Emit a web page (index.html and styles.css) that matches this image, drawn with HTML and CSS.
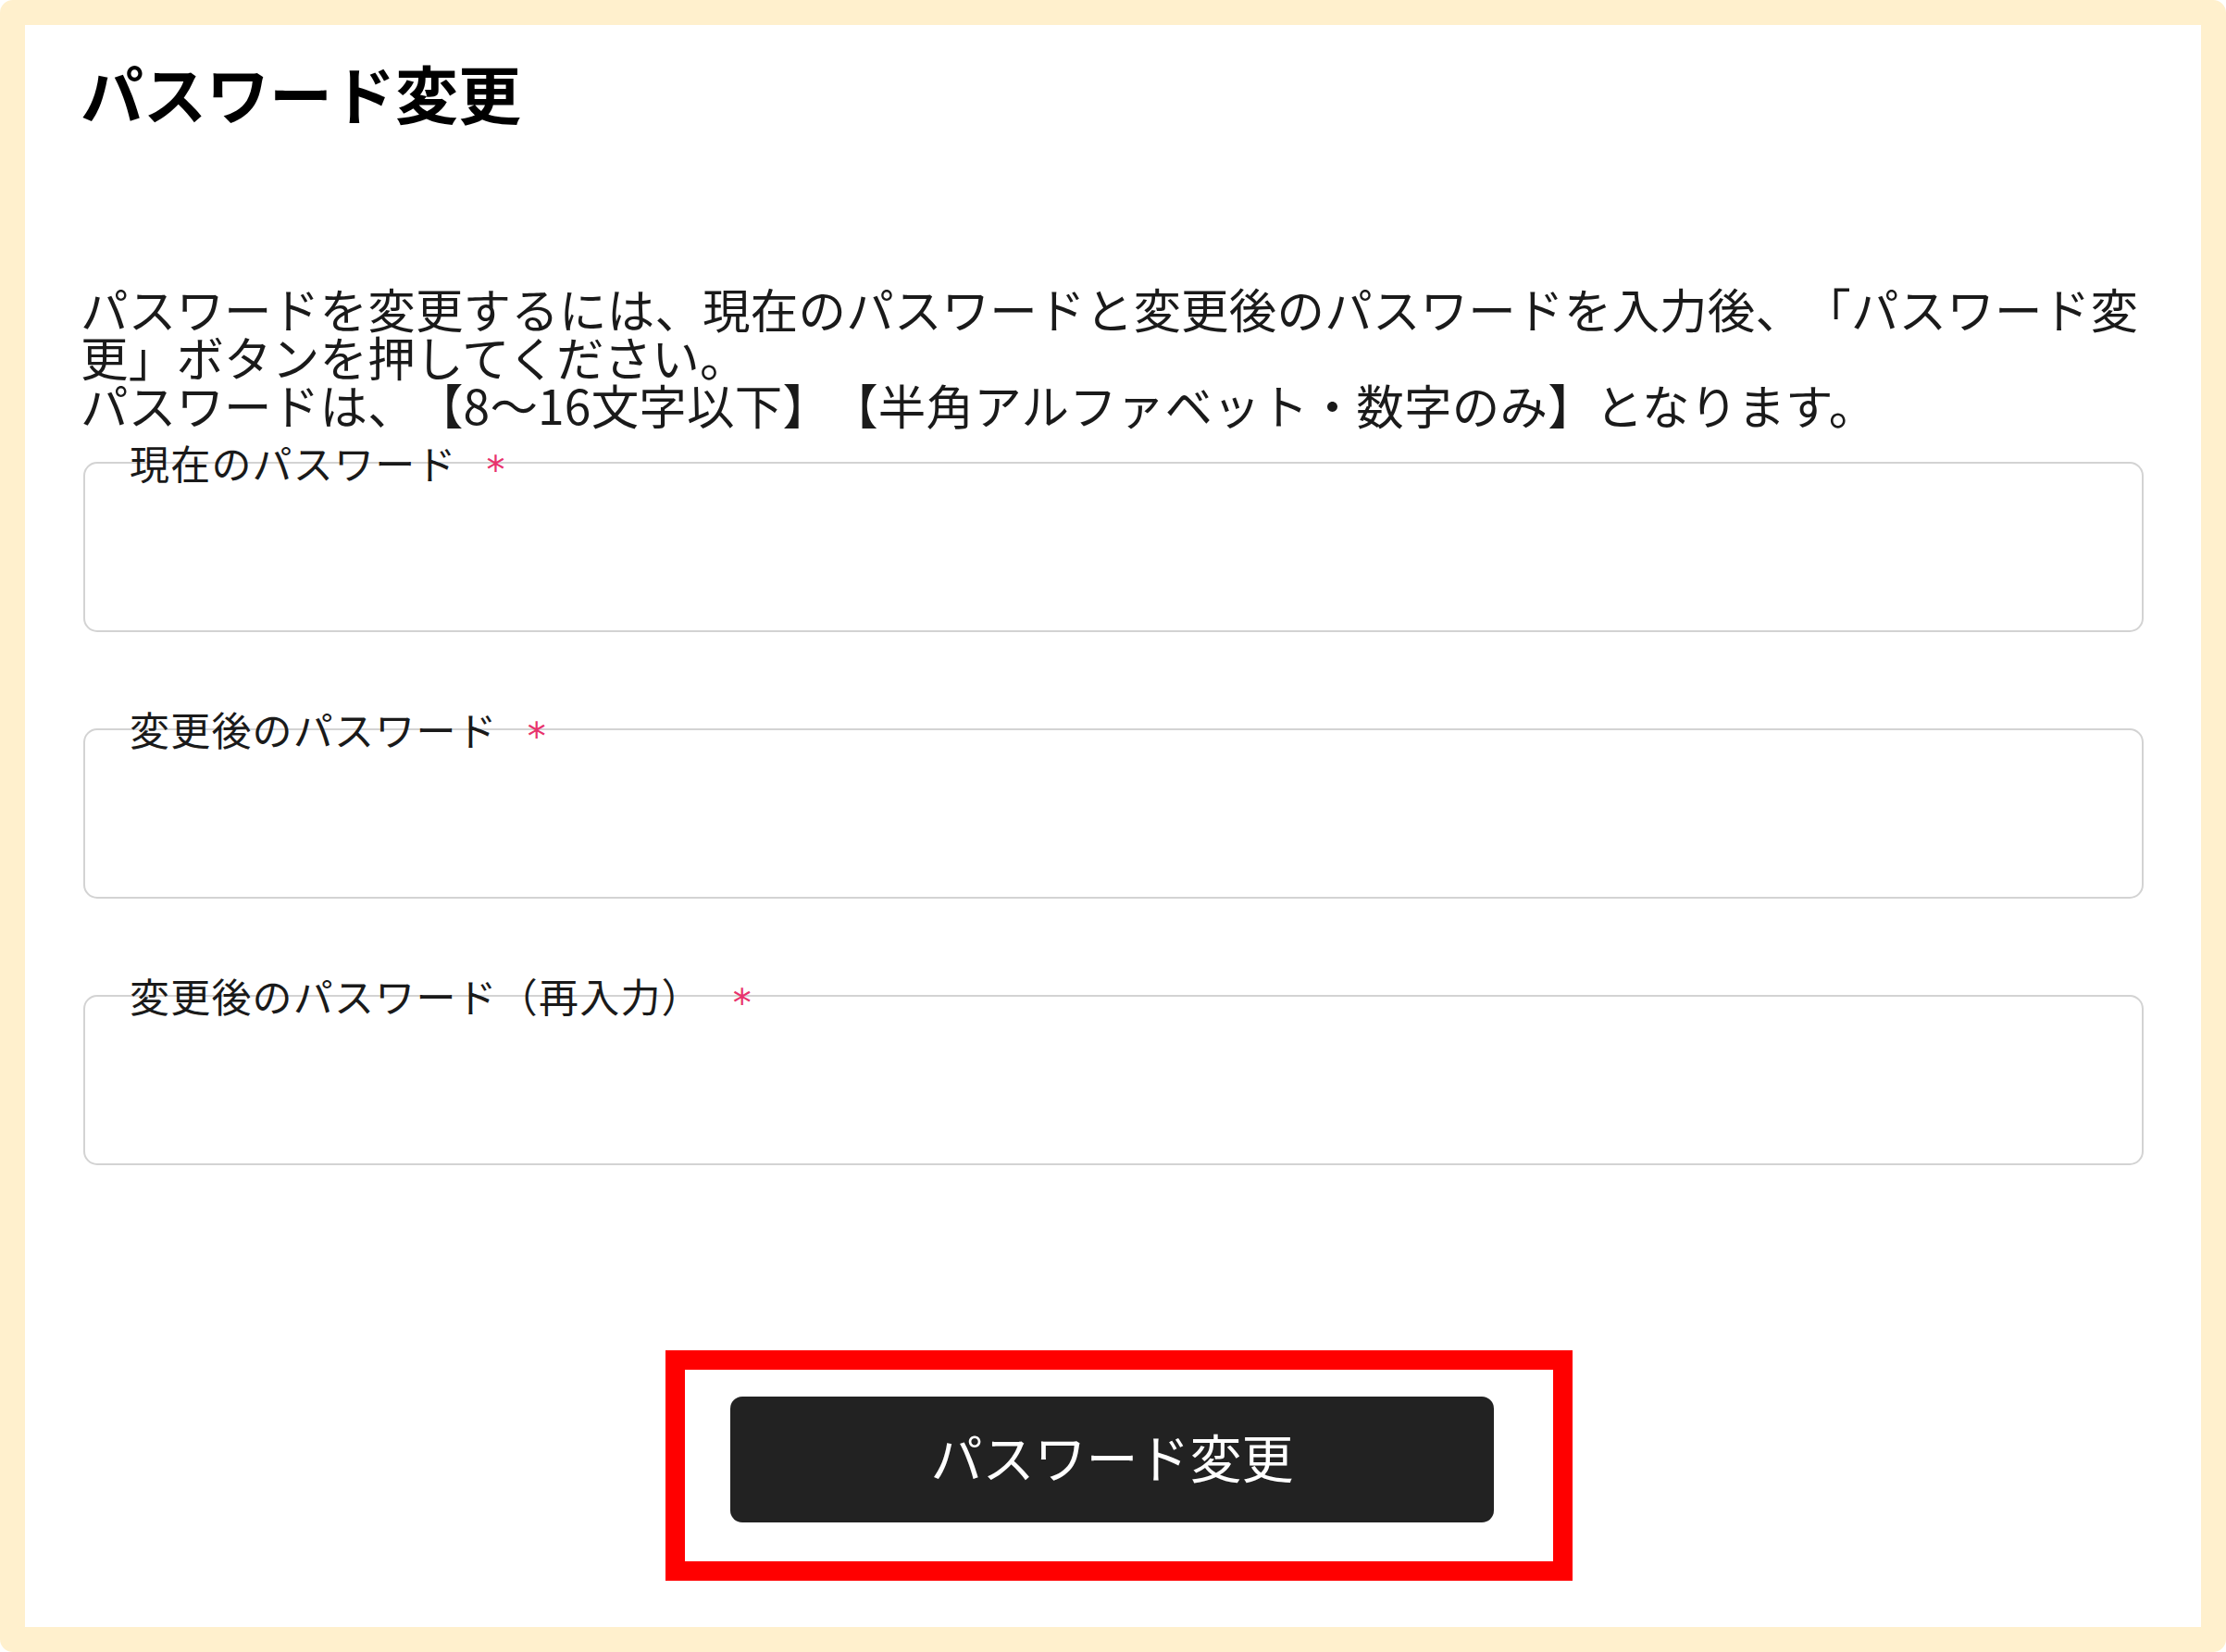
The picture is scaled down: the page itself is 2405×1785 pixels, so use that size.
FILE: index.html
```html
<!DOCTYPE html>
<html lang="ja">
<head>
<meta charset="utf-8">
<title>パスワード変更</title>
<link rel="stylesheet" href="styles.css">
</head>
<body>
<div class="frame">
  <main class="page">
    <h1 class="title">パスワード変更</h1>
    <p class="desc">パスワードを変更するには、現在のパスワードと変更後のパスワードを入力後、「パスワード変更」ボタンを押してください。<br>パスワードは、【8〜16文字以下】【半角アルファベット・数字のみ】となります。</p>
    <div class="fields">
      <div class="field"><span class="label">現在のパスワード<span class="req">*</span></span></div>
      <div class="field"><span class="label">変更後のパスワード<span class="req">*</span></span></div>
      <div class="field"><span class="label">変更後のパスワード（再入力）<span class="req req-wide">*</span></span></div>
    </div>
    <div class="actions">
      <div class="btn-wrap">
        <button class="btn" type="button">パスワード変更</button>
        <span class="highlight"></span>
      </div>
    </div>
  </main>
</div>
</body>
</html>
```
FILE: styles.css
```css
html, body {
  margin: 0;
  padding: 0;
  background: #ffffff;
}
body {
  font-family: "Noto Sans CJK JP", "Noto Sans", sans-serif;
  color: #1a1a1a;
  text-spacing-trim: space-all;
}
.frame {
  box-sizing: border-box;
  width: 2405px;
  height: 1785px;
  border: 27px solid #fff0cd;
  border-radius: 14px;
  background: #ffffff;
}
.page {
  padding: 39px 62px 0 60px;
}
.title {
  margin: 0;
  font-size: 68px;
  line-height: 68px;
  font-weight: 700;
  color: #000;
}
.desc {
  margin: 173px 0 0 0;
  font-size: 51.5px;
  line-height: 52px;
  letter-spacing: 0.2px;
  font-weight: 400;
  color: #1a1a1a;
}
.fields {
  margin-top: 36px;
  display: flex;
  flex-direction: column;
  gap: 104px;
  padding-left: 3px;
}
.field {
  position: relative;
  box-sizing: border-box;
  height: 184px;
  border: 2px solid #d3d3d3;
  border-radius: 15px;
}
.label {
  position: absolute;
  left: 48px;
  top: -28px;
  font-size: 43px;
  line-height: 52px;
  letter-spacing: 1.2px;
  color: #1a1a1a;
  white-space: nowrap;
}
.req {
  display: inline-block;
  margin-left: 32px;
  color: #e8336d;
  font-family: "DejaVu Sans", sans-serif;
  font-size: 40px;
  transform: translateY(4px);
}
.req-wide {
  margin-left: 33px;
}
.actions {
  margin-top: 250px;
  display: flex;
  justify-content: center;
}
.btn-wrap {
  position: relative;
}
.btn {
  display: block;
  width: 825px;
  height: 136px;
  border: none;
  border-radius: 13px;
  background: #222222;
  color: #ffffff;
  font-family: "Noto Sans CJK JP", "Noto Sans", sans-serif;
  font-size: 56px;
  font-weight: 400;
  padding: 0 0 10px 0;
}
.highlight {
  position: absolute;
  left: -70px;
  top: -50px;
  right: -85px;
  bottom: -63px;
  border: 21px solid #ff0000;
  pointer-events: none;
}
```
